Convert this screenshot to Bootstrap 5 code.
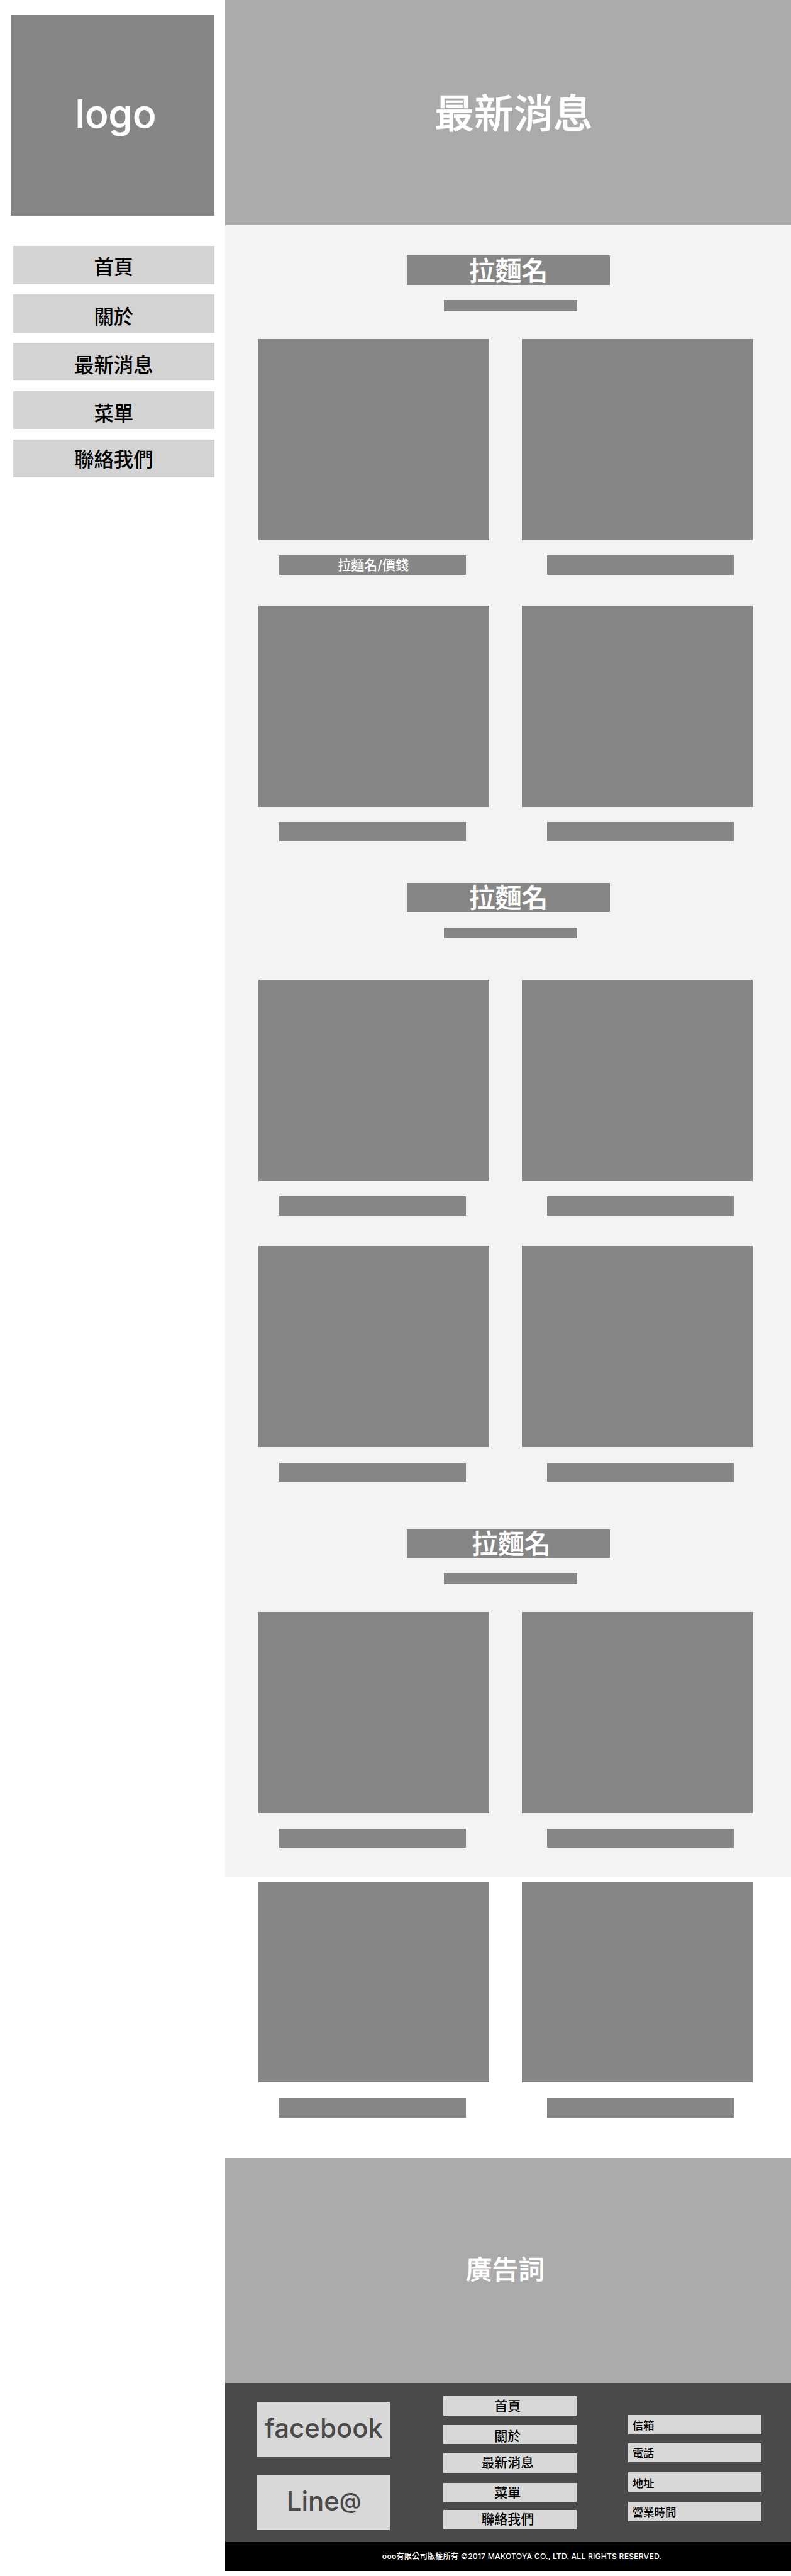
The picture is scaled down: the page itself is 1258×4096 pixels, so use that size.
<!DOCTYPE html>
<html lang="zh-Hant">
<head>
<meta charset="utf-8">
<meta name="viewport" content="width=device-width, initial-scale=1">
<title>最新消息</title>
<link href="https://cdn.jsdelivr.net/npm/bootstrap@5.3.0/dist/css/bootstrap.min.css" rel="stylesheet">
<style>
/* 1rem is ten design units */
html { font-size: 8.7375px; }
body { font-family: Inter, "Noto Sans CJK TC", sans-serif; font-weight: 500; line-height: 1; color: #000; background: #fff; overflow-x: hidden; }
a { color: inherit; text-decoration: none; }
.side { width: 41rem; padding: 2.7rem 2rem 0; }
.logo-box { height: 36.6rem; background: #868686; font-size: 7.1rem; padding: 0 0 .5rem 1.1rem; -webkit-text-stroke: .008em #fff; }
.side-nav { margin: 5.5rem 0 0 .4rem; gap: 1.9rem; }
.side-nav a { height: 6.9rem; background: #d3d3d3; font-size: 3.6rem; padding-top: 1.4rem; }
.side-nav a:first-child { padding-top: 1rem; }
.side-nav a:last-child { padding-top: .5rem; }
.hero, .sec-title, .ad { -webkit-text-stroke: .008em #fff; }
.hero { height: 41rem; background: #acaaab; font-size: 7.2rem; padding: .4rem 0 0 2rem; }
.menu-area { height: 300.5rem; background: #f3f3f3; padding: 5.5rem 7rem 0 6rem; }
.tile { background: #868686; }
.sec-title { width: 37rem; height: 5.3rem; margin-left: 27rem; font-size: 4.8rem; padding: .3rem 0 0 .1rem; }
.sec-title.nudge { padding-left: 1.1rem; }
.sec-sub { width: 24.3rem; height: 2rem; margin: 2.8rem 0 0 33.8rem; }
.dishes { gap: 6rem; }
.dish { width: 42rem; }
.photo { height: 36.6rem; }
.dish-label { width: 34rem; height: 3.5rem; margin: 2.8rem 0 0 3.8rem; font-size: 2.4rem; padding: .3rem 0 0 .3rem; }
.dish:last-child .dish-label { margin-left: 4.6rem; }
.overflow-row { padding: .9rem 7rem 0 6rem; height: 51.3rem; }
.gap-a { margin-top: 5.1rem; }
.gap-b { margin-top: 5.6rem; }
.gap-c { margin-top: 7.5rem; }
.gap-d { margin-top: 7.6rem; }
.gap-e { margin-top: 8.5rem; }
.ad { height: 40.9rem; background: #acaaab; font-size: 4.8rem; padding: 0 1.1rem .4rem 0; }
.foot { height: 28.9rem; background: #4a4a4a; padding-left: 5.7rem; }
.foot-tile { width: 24.3rem; background: #d8d8d8; }
.social { padding-top: 3.5rem; gap: 3.4rem; color: #4a4a4a; font-size: 4.8rem; }
.social a { height: 9.9rem; padding: 0 0 .6rem .2rem; }
.at-sign { font-size: .84em; line-height: 0; vertical-align: .09em; }
.links { margin-left: 9.7rem; padding-top: 2.4rem; font-size: 2.4rem; }
.links a, .contact > div { height: 3.5rem; }
.links a { margin-bottom: 1.7rem; padding: .1rem .9rem 0 0; }
.links a:nth-child(2) { padding-top: .7rem; }
.links a:nth-child(3) { margin-bottom: 1.8rem; padding: 0 .9rem .1rem 0; }
.links a:nth-child(4) { margin-bottom: 1.5rem; padding-top: .3rem; }
.links a:nth-child(5) { padding: 0 .9rem .1rem 0; }
.contact { margin-left: 9.3rem; padding-top: 5.8rem; font-size: 2rem; }
.contact > div { margin-bottom: 1.6rem; padding: .2rem 0 0 .8rem; }
.contact > div:nth-child(2) { margin-bottom: 1.8rem; }
.contact > div:nth-child(3) { margin-bottom: 1.9rem; padding-top: .5rem; }
.copy { height: 5.3rem; background: #000; color: #fff; font-size: 1.4rem; letter-spacing: .0125em; padding: 0 0 .1rem 5rem; }
</style>
</head>
<body>
<div class="d-flex align-items-start">
  <aside class="side flex-shrink-0">
    <a href="#" class="logo-box text-white d-flex align-items-center justify-content-center">logo</a>
    <nav class="side-nav d-flex flex-column">
      <a href="#" class="d-flex align-items-center justify-content-center">首頁</a>
      <a href="#" class="d-flex align-items-center justify-content-center">關於</a>
      <a href="#" class="d-flex align-items-center justify-content-center">最新消息</a>
      <a href="#" class="d-flex align-items-center justify-content-center">菜單</a>
      <a href="#" class="d-flex align-items-center justify-content-center">聯絡我們</a>
    </nav>
  </aside>
  <div class="flex-grow-1">
    <header class="hero text-white d-flex align-items-center justify-content-center"><span>最新消息</span></header>
    <main>
      <div class="menu-area">
        <div class="tile sec-title text-white d-flex align-items-center justify-content-center">拉麵名</div>
        <div class="tile sec-sub"></div>
        <div class="dishes d-flex gap-a">
          <div class="dish"><div class="tile photo"></div><div class="tile dish-label text-white d-flex align-items-center justify-content-center">拉麵名/價錢</div></div>
          <div class="dish"><div class="tile photo"></div><div class="tile dish-label"></div></div>
        </div>
        <div class="dishes d-flex gap-b">
          <div class="dish"><div class="tile photo"></div><div class="tile dish-label"></div></div>
          <div class="dish"><div class="tile photo"></div><div class="tile dish-label"></div></div>
        </div>
        <div class="tile sec-title gap-d text-white d-flex align-items-center justify-content-center">拉麵名</div>
        <div class="tile sec-sub"></div>
        <div class="dishes d-flex gap-c">
          <div class="dish"><div class="tile photo"></div><div class="tile dish-label"></div></div>
          <div class="dish"><div class="tile photo"></div><div class="tile dish-label"></div></div>
        </div>
        <div class="dishes d-flex gap-b">
          <div class="dish"><div class="tile photo"></div><div class="tile dish-label"></div></div>
          <div class="dish"><div class="tile photo"></div><div class="tile dish-label"></div></div>
        </div>
        <div class="tile sec-title gap-e nudge text-white d-flex align-items-center justify-content-center">拉麵名</div>
        <div class="tile sec-sub"></div>
        <div class="dishes d-flex gap-a">
          <div class="dish"><div class="tile photo"></div><div class="tile dish-label"></div></div>
          <div class="dish"><div class="tile photo"></div><div class="tile dish-label"></div></div>
        </div>
      </div>
      <div class="overflow-row">
        <div class="dishes d-flex">
          <div class="dish"><div class="tile photo"></div><div class="tile dish-label"></div></div>
          <div class="dish"><div class="tile photo"></div><div class="tile dish-label"></div></div>
        </div>
      </div>
    </main>
    <section class="ad text-white d-flex align-items-center justify-content-center"><span>廣告詞</span></section>
    <footer>
      <div class="foot d-flex align-items-start">
        <div class="social d-flex flex-column">
          <a href="#" class="foot-tile d-flex align-items-center justify-content-center">facebook</a>
          <a href="#" class="foot-tile d-flex align-items-center justify-content-center"><span>Line<span class="at-sign">@</span></span></a>
        </div>
        <nav class="links d-flex flex-column">
          <a href="#" class="foot-tile d-flex align-items-center justify-content-center">首頁</a>
          <a href="#" class="foot-tile d-flex align-items-center justify-content-center">關於</a>
          <a href="#" class="foot-tile d-flex align-items-center justify-content-center">最新消息</a>
          <a href="#" class="foot-tile d-flex align-items-center justify-content-center">菜單</a>
          <a href="#" class="foot-tile d-flex align-items-center justify-content-center">聯絡我們</a>
        </nav>
        <div class="contact d-flex flex-column">
          <div class="foot-tile d-flex align-items-center">信箱</div>
          <div class="foot-tile d-flex align-items-center">電話</div>
          <div class="foot-tile d-flex align-items-center">地址</div>
          <div class="foot-tile d-flex align-items-center">營業時間</div>
        </div>
      </div>
      <div class="copy d-flex align-items-center justify-content-center">ooo有限公司版權所有 ©2017 MAKOTOYA CO., LTD. ALL RIGHTS RESERVED.</div>
    </footer>
  </div>
</div>
<script src="https://cdn.jsdelivr.net/npm/bootstrap@5.3.0/dist/js/bootstrap.bundle.min.js"></script>
</body>
</html>
